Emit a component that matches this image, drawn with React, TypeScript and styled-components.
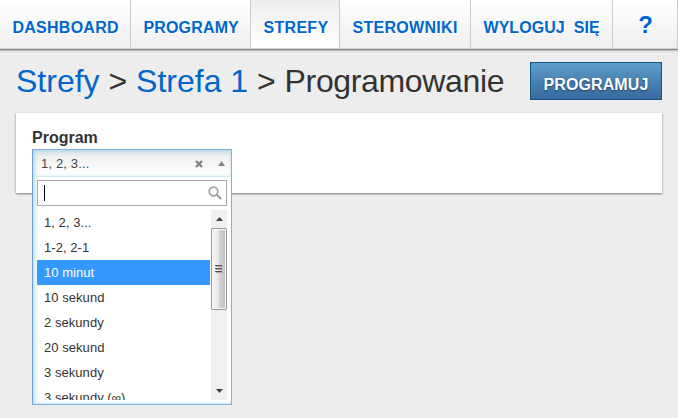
import React from "react";
import styled, { createGlobalStyle } from "styled-components";

const GlobalStyle = createGlobalStyle`
  * { box-sizing: border-box; }
  html, body { margin: 0; background: #ededed; overflow: hidden; }
  body { font-family: "Liberation Sans", Arial, sans-serif; color: #333; }
`;

const Page = styled.div`
  width: 678px;
  height: 418px;
`;

const Nav = styled.nav`
  display: flex;
  height: 49px;
  border-bottom: 1px solid #d2d2d2;
  box-shadow: 0 1px 1px #858585, 0 2px 2px #bbb;
`;

const NavItem = styled.a<{ $width: number; $spacing?: number; $active?: boolean; $big?: boolean }>`
  width: ${(p) => p.$width}px;
  flex: none;
  height: 48px;
  border-right: 1px solid #ccc;
  padding: ${(p) => (p.$big ? "10px 0 0 1px" : "18px 0 0 12.5px")};
  text-align: ${(p) => (p.$big ? "center" : "left")};
  font-size: ${(p) => (p.$big ? 24 : 16)}px;
  line-height: ${(p) => (p.$big ? 30 : 20)}px;
  font-weight: bold;
  letter-spacing: ${(p) => p.$spacing ?? 0}px;
  white-space: pre;
  color: #0066cc;
  text-shadow: 1px 1px 0 #fff;
  background: ${(p) =>
    p.$active ? "linear-gradient(#eeeeee, #ffffff)" : "linear-gradient(#ffffff, #efefef)"};
`;

const Header = styled.header`
  display: flex;
  align-items: flex-start;
  justify-content: space-between;
  height: 64px;
  padding: 13px 16px 0;
`;

const Title = styled.h1`
  margin: 0;
  font-size: 32px;
  line-height: 38px;
  font-weight: normal;
  white-space: nowrap;
`;

const Crumb = styled.a`
  color: #0066cc;
`;

const PageName = styled.span`
  letter-spacing: -0.35px;
`;

const Action = styled.button`
  width: 132px;
  height: 38px;
  padding: 7px 0 0;
  border: 1px solid #12527f;
  background: linear-gradient(#5d9cc8, #376a9e);
  color: #fff;
  font: bold 16px/20px "Liberation Sans", Arial, sans-serif;
  letter-spacing: 0.1px;
  text-shadow: 0 1px 2px #1c3f60;
`;

const Panel = styled.section`
  margin: 0 16px;
  height: 80px;
  padding: 16px 16px 0;
  background: #fff;
  box-shadow: 0 1px 2px #777;
`;

const Label = styled.div`
  height: 20px;
  font-size: 16px;
  line-height: 18px;
  font-weight: bold;
`;

const Select = styled.div`
  position: relative;
  width: 200px;
  height: 256px;
  border: 1px solid #84b0e0;
  border-left-color: #6b9fd0;
  background: #fff;
  box-shadow: inset 3px 0 4px -1px #b5dff0, inset 0 -2px 3px -1px #d6f0f8;
  font-size: 13px;
`;

const Current = styled.div`
  display: flex;
  align-items: center;
  height: 27px;
  padding: 0 6px 0 8px;
  border-bottom: 1px solid #d0ecf4;
  background: linear-gradient(#eeeeee 20%, #ffffff 90%);
  box-shadow: inset 0 3px 4px -1px #b2d9e7, inset 3px 0 4px -1px #b5dff0;
  color: #444;
`;

const Value = styled.span`
  flex: 1;
  padding-top: 2px;
  line-height: 26px;
  letter-spacing: 0.15px;
`;

const Indicators = styled.span`
  display: flex;
  align-items: center;
  gap: 15px;
  padding-top: 1px;
`;

const Search = styled.div`
  display: flex;
  align-items: center;
  justify-content: space-between;
  margin: 3px 4px 4px;
  height: 26px;
  padding: 0 4px 0 6px;
  border: 1px solid #aaa;
  background: #fff;
`;

const Caret = styled.span`
  width: 1px;
  height: 16px;
  background: #000;
`;

const ListArea = styled.div`
  display: flex;
  justify-content: space-between;
  height: 190px;
  margin: 0 4px;
  overflow: hidden;
`;

const Options = styled.ul`
  width: 173px;
  height: 190px;
  margin: 0;
  padding: 0;
  overflow: hidden;
  list-style: none;
`;

const Option = styled.li<{ $selected?: boolean }>`
  height: 25px;
  padding-left: 7px;
  line-height: 25px;
  letter-spacing: 0.05px;
  white-space: nowrap;
  color: ${(p) => (p.$selected ? "#fff" : "#333")};
  background: ${(p) => (p.$selected ? "#3399ff" : "transparent")};
`;

const Scrollbar = styled.div`
  display: flex;
  flex-direction: column;
  width: 16px;
  height: 190px;
  background: #f0f0f0;
`;

const ScrollButton = styled.div`
  display: flex;
  align-items: center;
  justify-content: center;
  height: 18px;
  flex: none;
`;

const Thumb = styled.div`
  display: flex;
  align-items: center;
  justify-content: center;
  height: 82px;
  border: 1px solid #979797;
  border-radius: 2px;
  box-shadow: inset 0 0 0 1px #f8f8f8;
  background: linear-gradient(90deg, #f5f5f5 0%, #e9e9eb 45%, #d4d4d7 50%, #c0c0c4 100%);
`;

const Spacer = styled.div`
  flex: 1;
`;

const navItems = [
  { text: "DASHBOARD", width: 131, spacing: 0.25 },
  { text: "PROGRAMY", width: 120, spacing: 0.15 },
  { text: "STREFY", width: 89, active: true, spacing: 0.3 },
  { text: "STEROWNIKI", width: 131, spacing: 0.3 },
  { text: "WYLOGUJ  SIĘ", width: 142, spacing: 0.05 },
  { text: "?", width: 65, big: true },
];

const options = [
  "1, 2, 3...",
  "1-2, 2-1",
  "10 minut",
  "10 sekund",
  "2 sekundy",
  "20 sekund",
  "3 sekundy",
  "3 sekundy (∞)",
];

export default function App() {
  return (
    <Page>
      <GlobalStyle />
      <Nav>
        {navItems.map((n) => (
          <NavItem
            key={n.text}
            $width={n.width}
            $spacing={n.spacing}
            $active={n.active}
            $big={n.big}
          >
            {n.text}
          </NavItem>
        ))}
      </Nav>
      <Header>
        <Title>
          <Crumb>Strefy</Crumb> &gt; <Crumb>Strefa 1</Crumb> &gt; <PageName>Programowanie</PageName>
        </Title>
        <Action>PROGRAMUJ</Action>
      </Header>
      <Panel>
        <Label>Program</Label>
        <Select>
          <Current>
            <Value>1, 2, 3...</Value>
            <Indicators>
              <svg width="8" height="8" viewBox="0 0 8 8">
                <path d="M1 1L7 7M7 1L1 7" stroke="#858585" strokeWidth="2.4" />
              </svg>
              <svg width="7" height="6" viewBox="0 0 7 6">
                <path d="M3.5 0L7 5H0Z" fill="#858585" />
              </svg>
            </Indicators>
          </Current>
          <Search>
            <Caret />
            <svg width="14" height="14" viewBox="0 0 14 14" fill="none" stroke="#a0a0a0">
              <circle cx="5.5" cy="5.5" r="4.3" strokeWidth="1.7" />
              <path d="M8.8 8.8L13 13" strokeWidth="2.2" />
            </svg>
          </Search>
          <ListArea>
            <Options>
              {options.map((o) => (
                <Option key={o} $selected={o === "10 minut"}>
                  {o}
                </Option>
              ))}
            </Options>
            <Scrollbar>
              <ScrollButton>
                <svg width="7" height="4" viewBox="0 0 7 4">
                  <path d="M3.5 0L7 4H0Z" fill="#404040" />
                </svg>
              </ScrollButton>
              <Thumb>
                <svg width="8" height="8" viewBox="0 0 8 8">
                  <path d="M0 .5H7M0 3.5H7M0 6.5H7" stroke="#555" />
                  <path d="M1 1.5H8M1 4.5H8M1 7.5H8" stroke="#aaa" />
                </svg>
              </Thumb>
              <Spacer />
              <ScrollButton>
                <svg width="7" height="4" viewBox="0 0 7 4">
                  <path d="M3.5 4L7 0H0Z" fill="#404040" />
                </svg>
              </ScrollButton>
            </Scrollbar>
          </ListArea>
        </Select>
      </Panel>
    </Page>
  );
}
